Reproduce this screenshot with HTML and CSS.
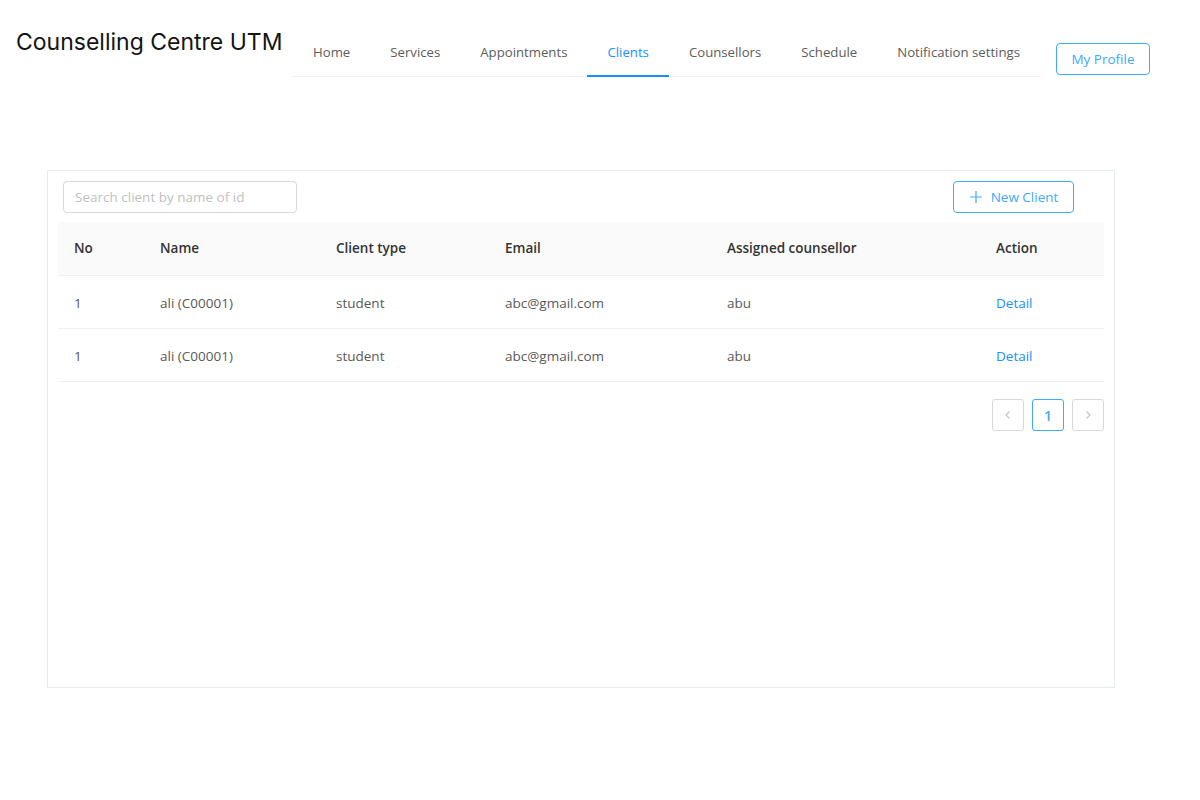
FILE: index.html
```html
<!DOCTYPE html>
<html lang="en">
<head>
<meta charset="utf-8">
<title>Counselling Centre UTM - Clients</title>
<link rel="stylesheet" href="styles.css">
</head>
<body>
<header class="topbar">
  <div class="brand">Counselling Centre UTM</div>
  <nav class="menu">
    <a class="menu-item">Home</a>
    <a class="menu-item">Services</a>
    <a class="menu-item">Appointments</a>
    <a class="menu-item active">Clients</a>
    <a class="menu-item">Counsellors</a>
    <a class="menu-item">Schedule</a>
    <a class="menu-item">Notification settings</a>
  </nav>
  <button class="btn btn-outline profile-btn">My Profile</button>
</header>

<main class="card">
  <div class="toolbar">
    <input class="search" type="text" placeholder="Search client by name of id">
    <button class="btn btn-outline new-btn">
      <svg class="plus" width="14" height="14" viewBox="0 0 14 14"><path d="M7 1v12M1 7h12" stroke="currentColor" stroke-width="1.2" fill="none"/></svg>
      <span>New Client</span>
    </button>
  </div>

  <table class="table">
    <colgroup>
      <col class="c-no"><col class="c-name"><col class="c-type"><col class="c-email"><col class="c-couns"><col class="c-act">
    </colgroup>
    <thead>
      <tr><th>No</th><th>Name</th><th>Client type</th><th>Email</th><th>Assigned counsellor</th><th>Action</th></tr>
    </thead>
    <tbody>
      <tr><td>1</td><td>ali (C00001)</td><td>student</td><td>abc@gmail.com</td><td>abu</td><td><a class="link">Detail</a></td></tr>
      <tr><td>1</td><td>ali (C00001)</td><td>student</td><td>abc@gmail.com</td><td>abu</td><td><a class="link">Detail</a></td></tr>
    </tbody>
  </table>

  <div class="pager">
    <span class="page-item disabled">
      <svg width="10" height="10" viewBox="0 0 10 10"><path d="M6.5 1.5L3 5l3.5 3.5" stroke="currentColor" stroke-width="1.1" fill="none"/></svg>
    </span>
    <span class="page-item current">1</span>
    <span class="page-item disabled">
      <svg width="10" height="10" viewBox="0 0 10 10"><path d="M3.5 1.5L7 5 3.5 8.5" stroke="currentColor" stroke-width="1.1" fill="none"/></svg>
    </span>
  </div>
</main>
</body>
</html>
```

FILE: styles.css
```css
* { box-sizing: border-box; }

body {
  margin: 0;
  background: #ffffff;
  font-family: "Open Sans", "Noto Sans", sans-serif;
  font-size: 13.5px;
  color: #595959;
}

.topbar {
  display: flex;
  align-items: flex-start;
  padding: 0 0 0 16px;
}

.brand {
  font-family: Inter, "Liberation Sans", sans-serif;
  font-size: 23px;
  color: #141414;
  margin-top: 28px;
  line-height: 29px;
  width: 265px;
  white-space: nowrap;
}

.menu {
  display: flex;
  margin-left: 12px;
  margin-top: 30px;
  border-bottom: 1px solid #f0f0f0;
  width: 749px;
  font-size: 13.2px;
}

.menu-item {
  display: block;
  padding: 0 20px;
  line-height: 45px;
  color: #5c5c5c;
  border-bottom: 2px solid transparent;
  margin-bottom: -1px;
  white-space: nowrap;
}

.menu-item.active {
  color: #1890ff;
  border-bottom-color: #1890ff;
}

.btn {
  font-family: "Open Sans", "Noto Sans", sans-serif;
  font-size: 13.5px;
  background: #fff;
  border-radius: 4px;
  height: 32px;
  padding: 0 15px;
  cursor: pointer;
}

.btn-outline {
  border: 1px solid #40a9ff;
  color: #40a9ff;
}

.profile-btn {
  margin-left: 14px;
  margin-top: 43px;
  width: 94px;
  padding: 0;
}

.card {
  margin: 93px 0 0 47px;
  width: 1068px;
  height: 518px;
  border: 1px solid #e6ebf1;
  padding: 10px 10px;
}

.toolbar {
  display: flex;
  justify-content: space-between;
  align-items: center;
  padding: 0 30px 0 5px;
  margin-bottom: 9px;
}

.search {
  width: 234px;
  height: 32px;
  border: 1px solid #d9d9d9;
  border-radius: 4px;
  padding: 0 11px;
  font-family: "Open Sans", "Noto Sans", sans-serif;
  font-size: 13.5px;
  color: #595959;
  outline: none;
}

.search::placeholder { color: #bfbfbf; }

.new-btn {
  display: flex;
  align-items: center;
  gap: 8px;
  width: 121px;
  justify-content: center;
  padding: 0;
}

.table {
  width: 100%;
  border-collapse: collapse;
  table-layout: fixed;
}

.c-no { width: 86px; }
.c-name { width: 176px; }
.c-type { width: 169px; }
.c-email { width: 222px; }
.c-couns { width: 269px; }
.c-act { width: 124px; }

.table th {
  text-align: left;
  background: #fafafa;
  color: #333333;
  font-weight: 600;
  padding: 16px;
  line-height: 21px;
  border-bottom: 1px solid #f0f0f0;
}

.table td {
  padding: 17px 16px 15px;
  line-height: 20px;
  color: #595959;
  border-bottom: 1px solid #f0f0f0;
}

.link { color: #1890ff; }

.pager {
  display: flex;
  justify-content: flex-end;
  gap: 8px;
  margin-top: 17px;
}

.page-item {
  width: 32px;
  height: 32px;
  border: 1px solid #d9d9d9;
  border-radius: 3px;
  display: flex;
  align-items: center;
  justify-content: center;
  color: #c4c4c4;
  font-size: 14px;
}

.page-item.current {
  border-color: #40a9ff;
  color: #40a9ff;
  font-weight: 600;
}
```
